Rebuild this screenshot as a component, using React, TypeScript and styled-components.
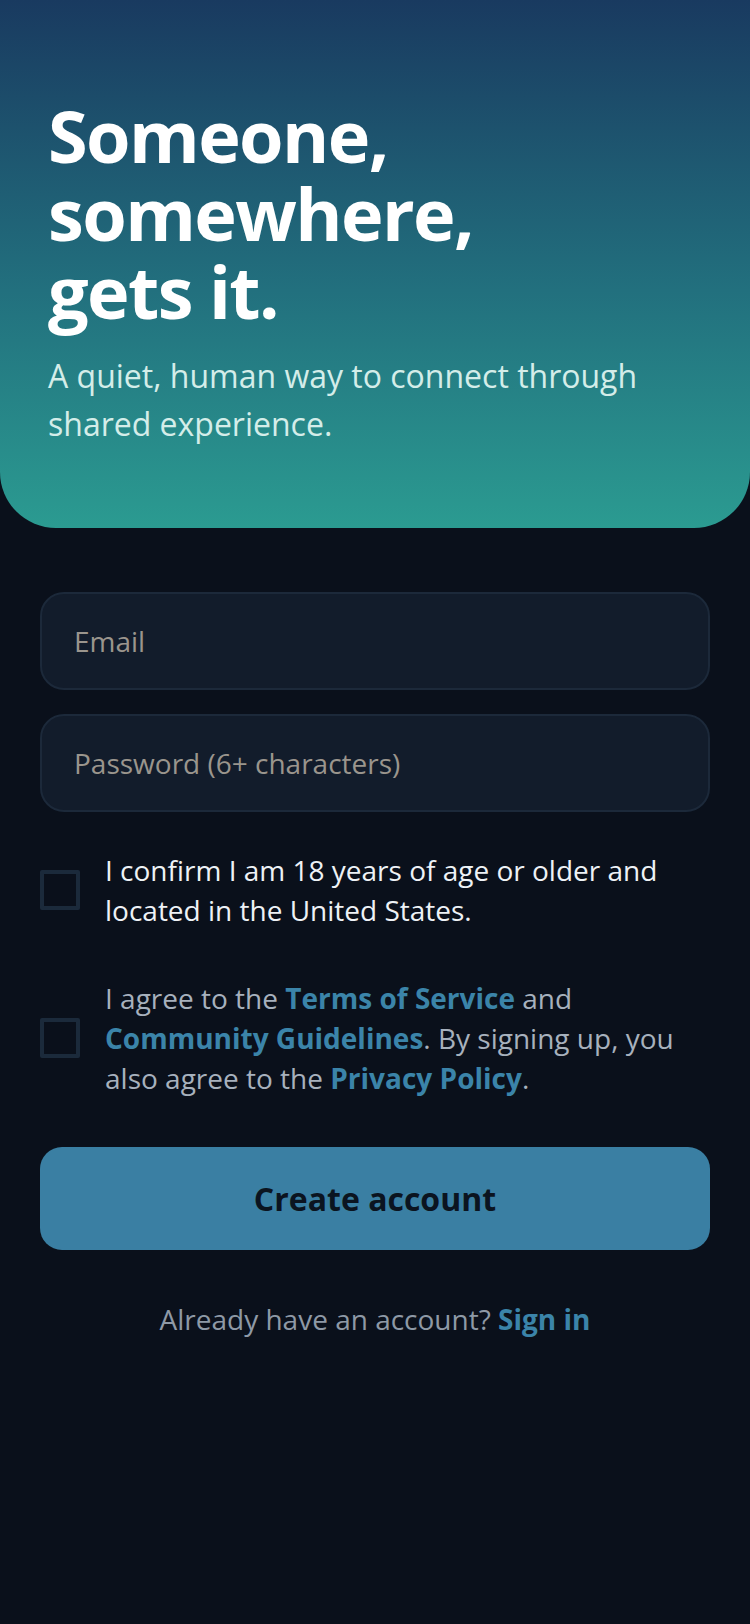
import React from "react";
import styled, { createGlobalStyle } from "styled-components";

const GlobalStyle = createGlobalStyle`
  html, body {
    margin: 0;
    padding: 0;
    background: #0a101b;
  }
  body {
    font-family: "Open Sans", "Noto Sans", sans-serif;
    -webkit-font-smoothing: antialiased;
  }
  * { box-sizing: border-box; }
`;

const Page = styled.div`
  min-height: 1624px;
  background: #0a101b;
`;

const Hero = styled.header`
  padding: 96px 48px 80px;
  background: linear-gradient(180deg, #193a60 0%, #22707e 55%, #2b9b91 100%);
  border-radius: 0 0 56px 56px;
`;

const Title = styled.h1`
  margin: 0;
  color: #ffffff;
  font-size: 72px;
  line-height: 78px;
  font-weight: 700;
  letter-spacing: -1.6px;
`;

const Lead = styled.p`
  margin: 22px 0 0;
  color: #d4ede9;
  font-size: 32px;
  line-height: 48px;
  font-weight: 400;
`;

const Form = styled.form`
  display: flex;
  flex-direction: column;
  padding: 64px 40px 0;
`;

const Field = styled.input`
  width: 100%;
  height: 98px;
  padding: 0 32px;
  margin-bottom: 24px;
  background: #121c2b;
  border: 2px solid #1c293a;
  border-radius: 24px;
  color: #e8edf2;
  font-family: inherit;
  font-size: 28px;
  outline: none;

  &::placeholder {
    color: #9a958d;
  }
`;

const CheckRow = styled.label<{ $gap: number }>`
  display: flex;
  align-items: center;
  gap: 25px;
  margin-top: ${(p) => p.$gap}px;
`;

const Box = styled.span`
  flex: none;
  width: 40px;
  height: 40px;
  border: 4px solid #1b2a3b;
  border-radius: 2px;
`;

const CheckText = styled.span<{ $muted?: boolean }>`
  color: ${(p) => (p.$muted ? "#a7b1bd" : "#eef2f6")};
  font-size: 28px;
  line-height: 40px;
`;

const Link = styled.a`
  color: #3b84a9;
  font-weight: 700;
  text-decoration: none;
`;

const Submit = styled.button`
  margin-top: 49px;
  height: 103px;
  border: 0;
  border-radius: 22px;
  background: #3a7fa3;
  color: #0b1420;
  font-family: inherit;
  font-size: 32px;
  font-weight: 700;
  cursor: pointer;
`;

const Footer = styled.p`
  margin: 49px 0 0;
  text-align: center;
  color: #8e99a6;
  font-size: 28px;
  line-height: 40px;
`;

export default function App() {
  return (
    <Page>
      <GlobalStyle />
      <Hero>
        <Title>
          Someone,
          <br />
          somewhere,
          <br />
          gets it.
        </Title>
        <Lead>A quiet, human way to connect through shared experience.</Lead>
      </Hero>

      <Form onSubmit={(e) => e.preventDefault()}>
        <Field type="email" placeholder="Email" />
        <Field type="password" placeholder="Password (6+ characters)" />

        <CheckRow $gap={14}>
          <Box />
          <CheckText>
            I confirm I am 18 years of age or older and located in the United States.
          </CheckText>
        </CheckRow>

        <CheckRow $gap={48}>
          <Box />
          <CheckText $muted>
            I agree to the <Link href="#">Terms of Service</Link> and{" "}
            <Link href="#">Community Guidelines</Link>. By signing up, you also agree
            to the <Link href="#">Privacy Policy</Link>.
          </CheckText>
        </CheckRow>

        <Submit type="submit">Create account</Submit>

        <Footer>
          Already have an account? <Link href="#">Sign in</Link>
        </Footer>
      </Form>
    </Page>
  );
}
